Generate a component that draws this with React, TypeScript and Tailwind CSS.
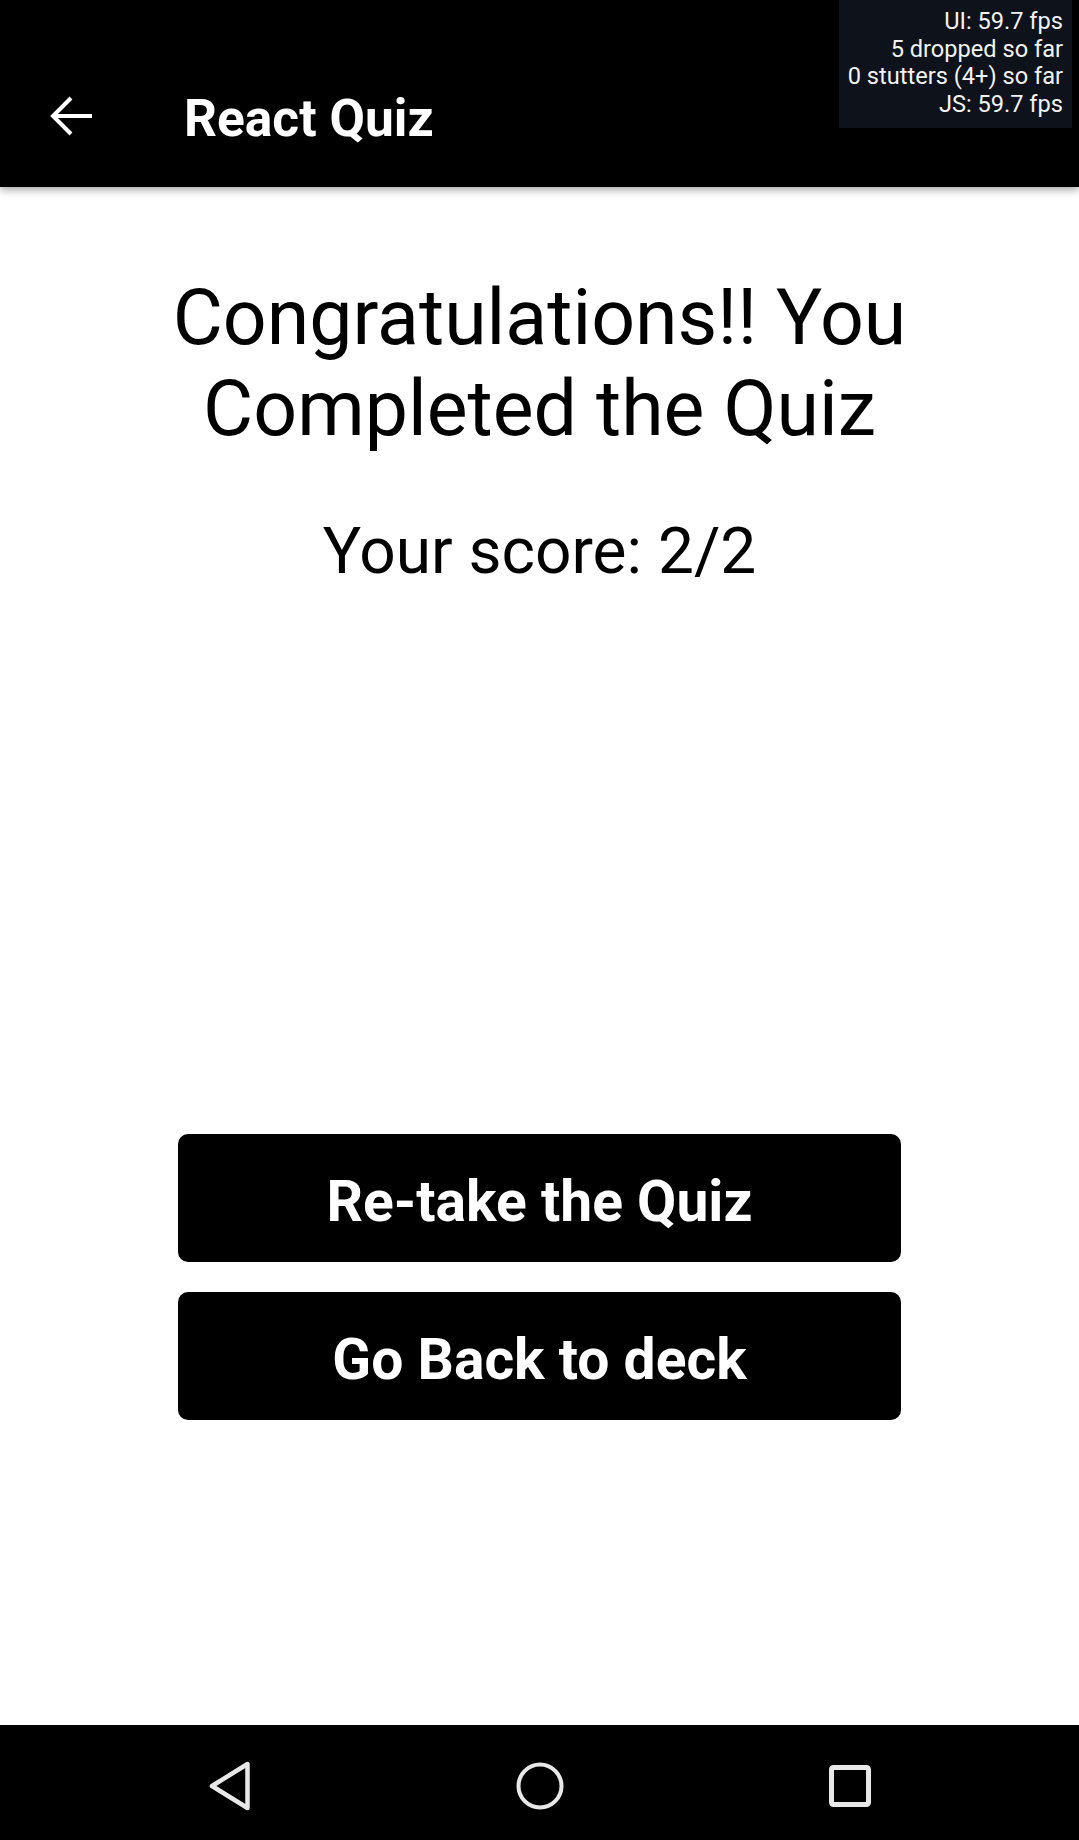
import React from "react";

function BackArrow() {
  return (
    <svg width="64" height="64" viewBox="0 0 64 64" fill="none">
      <path d="M52 32H13" stroke="white" strokeWidth="4" strokeLinecap="butt" />
      <path d="M31 14L13 32L31 50" stroke="white" strokeWidth="4" strokeLinecap="butt" strokeLinejoin="miter" />
    </svg>
  );
}

function NavBack() {
  return (
    <svg width="64" height="64" viewBox="0 0 64 64" fill="none">
      <path d="M14 32L49.5 10V54Z" stroke="#e8e8e8" strokeWidth="4.5" strokeLinejoin="round" />
    </svg>
  );
}

function NavHome() {
  return (
    <svg width="64" height="64" viewBox="0 0 64 64" fill="none">
      <circle cx="32" cy="32" r="21.5" stroke="#e8e8e8" strokeWidth="4" />
    </svg>
  );
}

function NavRecent() {
  return (
    <svg width="64" height="64" viewBox="0 0 64 64" fill="none">
      <rect x="13.5" y="13.5" width="37" height="37" rx="2" stroke="#e8e8e8" strokeWidth="5" />
    </svg>
  );
}

export default function App() {
  return (
    <div className="relative flex h-[1840px] w-[1079px] flex-col overflow-hidden bg-white font-['Roboto']">
      <header className="relative z-10 flex h-[187px] shrink-0 items-start bg-black shadow-[0_3px_8px_rgba(0,0,0,0.35)]">
        <div className="ml-[40px] mt-[84px]">
          <BackArrow />
        </div>
        <h1 className="ml-[80px] mt-[88px] text-[51.5px] font-bold leading-[61px] text-white">React Quiz</h1>
        <div className="absolute right-[7px] top-0 h-[128px] w-[233px] bg-[#0e121b] pr-[9px] pt-[8px] text-right text-[23.6px] leading-[27.7px] text-[#f2f2f2]">
          <div>UI: 59.7 fps</div>
          <div>5 dropped so far</div>
          <div>0 stutters (4+) so far</div>
          <div>JS: 59.7 fps</div>
        </div>
      </header>

      <main className="flex flex-1 flex-col items-center">
        <h2 className="mt-[86px] w-[800px] text-center text-[77px] font-normal leading-[91px] text-black">
          Congratulations!! You Completed the Quiz
        </h2>
        <p className="mt-[59px] text-center text-[64px] leading-[75px] text-black">Your score: 2/2</p>

        <div className="mt-[545px] flex w-[723px] flex-col gap-[30px]">
          <button className="flex h-[128px] items-center justify-center rounded-[10px] bg-black pt-[6px] text-[57px] font-bold leading-[67px] text-white">
            Re-take the Quiz
          </button>
          <button className="flex h-[128px] items-center justify-center rounded-[10px] bg-black pt-[6px] text-[57px] font-bold leading-[67px] text-white">
            Go Back to deck
          </button>
        </div>
      </main>

      <nav className="flex h-[115px] shrink-0 items-center justify-center gap-[246px] bg-black pt-[6px]">
        <NavBack />
        <NavHome />
        <NavRecent />
      </nav>
    </div>
  );
}
